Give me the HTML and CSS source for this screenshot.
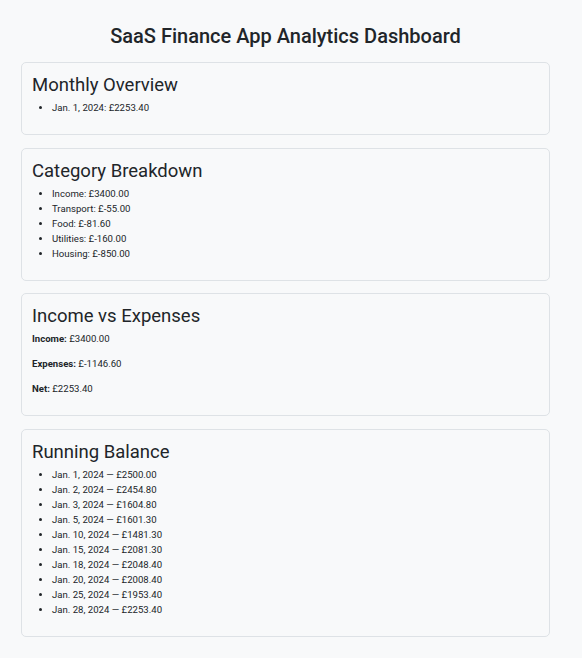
FILE: index.html
```html
<!DOCTYPE html>
<html lang="en">
<head>
    <meta charset="UTF-8">
    <meta name="viewport" content="width=device-width, initial-scale=1.0">
    <title>SaaS Finance App Analytics Dashboard</title>
    <link rel="stylesheet" href="styles.css">
</head>
<body>
    <div id="dashboard">
        <h1>SaaS Finance App Analytics Dashboard</h1>

        <div class="card">
            <h2>Monthly Overview</h2>
            <ul>
                <li>Jan. 1, 2024: £2253.40</li>
            </ul>
        </div>

        <div class="card">
            <h2>Category Breakdown</h2>
            <ul>
                <li>Income: £3400.00</li>
                <li>Transport: £-55.00</li>
                <li>Food: £-81.60</li>
                <li>Utilities: £-160.00</li>
                <li>Housing: £-850.00</li>
            </ul>
        </div>

        <div class="card">
            <h2>Income vs Expenses</h2>
            <p><strong>Income:</strong> £3400.00</p>
            <p><strong>Expenses:</strong> £-1146.60</p>
            <p><strong>Net:</strong> £2253.40</p>
        </div>

        <div class="card">
            <h2>Running Balance</h2>
            <ul>
                <li>Jan. 1, 2024 — £2500.00</li>
                <li>Jan. 2, 2024 — £2454.80</li>
                <li>Jan. 3, 2024 — £1604.80</li>
                <li>Jan. 5, 2024 — £1601.30</li>
                <li>Jan. 10, 2024 — £1481.30</li>
                <li>Jan. 15, 2024 — £2081.30</li>
                <li>Jan. 18, 2024 — £2048.40</li>
                <li>Jan. 20, 2024 — £2008.40</li>
                <li>Jan. 25, 2024 — £1953.40</li>
                <li>Jan. 28, 2024 — £2253.40</li>
            </ul>
        </div>
    </div>
</body>
</html>
```

FILE: styles.css
```css
body {
    font-family: Roboto, "Noto Sans", sans-serif;
    background-color: #f8f9fa;
    color: #212529;
    margin: 0;
    padding: 0;
}
#dashboard {
    padding: 24px 32px 20px 21px;
}
h1 {
    text-align: center;
    font-size: 20px;
    font-weight: 500;
    line-height: 24px;
    margin: 0 0 14px;
}
.card {
    background: #f8f9fa;
    border: 1px solid #dee2e6;
    border-radius: 5px;
    padding: 10px;
    margin-bottom: 12.7px;
    font-size: 9.6px;
    line-height: 15px;
}
.card h2 {
    font-size: 18.5px;
    font-weight: 400;
    line-height: 23px;
    margin: 1px 0 3px;
}
.card ul {
    margin: 0 0 9px;
    padding-left: 20px;
}
.card p {
    margin: 0 0 10px;
}
.card p:last-child {
    margin-bottom: 9px;
}
.card strong {
    font-weight: 700;
}
```
